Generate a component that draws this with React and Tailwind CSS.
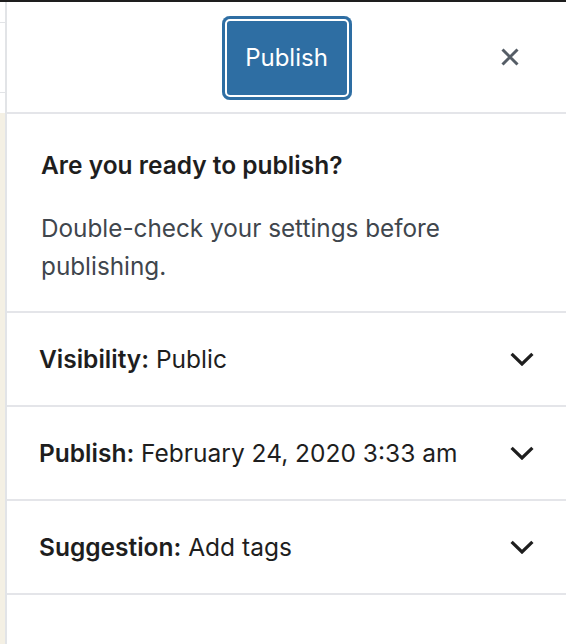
import React from "react";

const font = { fontFamily: 'Inter, "Noto Sans", "Liberation Sans", sans-serif' };

function Chevron() {
  return (
    <svg width="24" height="14" viewBox="0 0 24 14" fill="none" className="shrink-0">
      <path d="M1.6 1.8 L12 12 L22.4 1.8" stroke="#1e1e1e" strokeWidth="3.2" />
    </svg>
  );
}

function Row({ label, value }) {
  return (
    <div className="flex h-[94px] items-center justify-between border-b-2 border-[#e4e5e9] pl-[32px] pr-[32px]">
      <div className="text-[24.5px] leading-[30px] text-[#1e1e1e]">
        <span className="font-semibold">{label}</span> {value}
      </div>
      <Chevron />
    </div>
  );
}

export default function App() {
  return (
    <div className="flex h-[644px] w-[566px] flex-col overflow-hidden bg-white" style={font}>
      <div className="h-[2px] bg-[#1e1e1e]" />
      <div className="flex flex-1">
        <div className="flex w-[5px] flex-col">
          <div className="h-[20px] bg-white" />
          <div className="h-px bg-[#e2e4e7]" />
          <div className="h-[69px] bg-white" />
          <div className="h-px bg-[#e2e4e7]" />
          <div className="h-[20px] bg-white" />
          <div className="flex-1 bg-[#f4f0e4]" />
        </div>
        <div className="w-[2px] bg-[#e2e4e7]" />
        <div className="flex flex-1 flex-col bg-white">
          <div className="grid h-[112px] grid-cols-[1fr_auto_1fr] items-center border-b-2 border-[#e4e5e9]">
            <div />
            <button className="mt-[2px] flex h-[84px] w-[130px] items-center justify-center rounded-[8px] bg-[#2e6ea3] text-[24px] text-white shadow-[inset_0_0_0_3px_#2e6ea3,inset_0_0_0_5px_#ffffff]">
              Publish
            </button>
            <div className="flex justify-end pr-[46px]">
              <svg width="20" height="20" viewBox="0 0 20 20" fill="none">
                <path d="M2.5 2.5 L17.5 17.5 M17.5 2.5 L2.5 17.5" stroke="#555d66" strokeWidth="3" />
              </svg>
            </div>
          </div>
          <div className="border-b-2 border-[#e4e5e9] pb-[26px] pl-[34px] pr-[32px] pt-[36px]">
            <div className="text-[24.5px] font-semibold leading-[30px] text-[#1e1e1e]">Are you ready to publish?</div>
            <p className="mt-[29px] max-w-[430px] text-[24.3px] leading-[38px] text-[#40464d]">
              Double-check your settings before publishing.
            </p>
          </div>
          <Row label="Visibility:" value="Public" />
          <Row label="Publish:" value="February 24, 2020 3:33 am" />
          <Row label="Suggestion:" value="Add tags" />
        </div>
      </div>
    </div>
  );
}
